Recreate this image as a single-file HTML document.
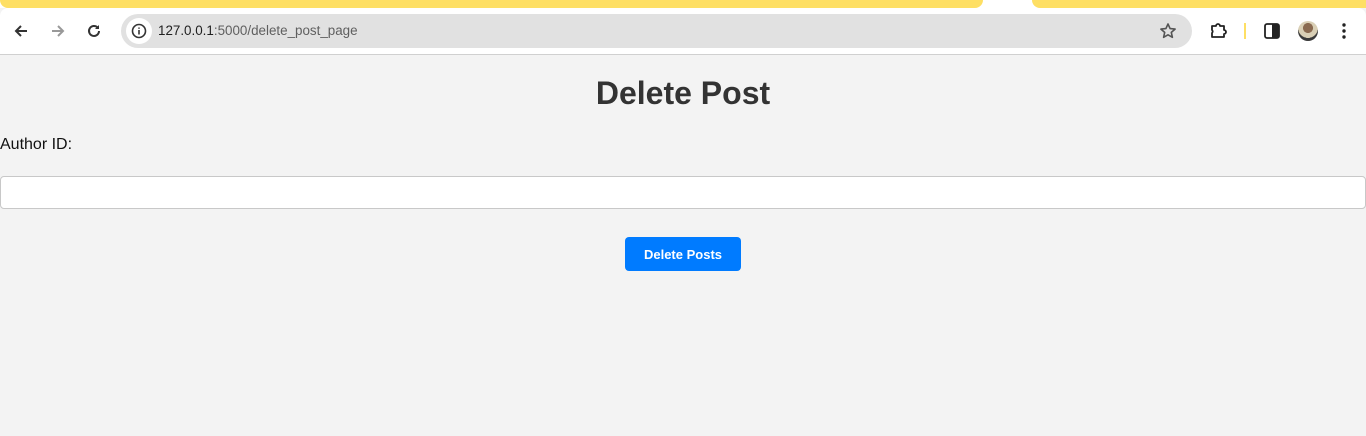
<!DOCTYPE html>
<html><head><meta charset="utf-8"><style>
*{box-sizing:border-box;margin:0;padding:0}
body{width:1366px;height:436px;overflow:hidden;background:#f3f3f3;font-family:"Liberation Sans",Arial,sans-serif;position:relative}
.tabs{position:absolute;left:0;top:0;width:1366px;height:8px;background:#fff}
.y1{position:absolute;left:0;top:0;width:983px;height:8px;background:#fedf64;border-radius:0 0 10px 10px}
.y2{position:absolute;left:1032px;top:0;width:334px;height:8px;background:#fedf64;border-radius:0 0 0 10px}
.bar{position:absolute;left:0;top:8px;width:1366px;height:46px;background:#fff;border-radius:8px 8px 0 0}
.line{position:absolute;left:0;top:54px;width:1366px;height:1px;background:#d0d0d0}
.omni{position:absolute;left:121px;top:14px;width:1071px;height:34px;background:#e1e1e1;border-radius:17px}
.info{position:absolute;left:126px;top:18px;width:26px;height:26px;border-radius:13px;background:#fff}
.url{position:absolute;left:158px;top:23px;font-size:13.4px;color:#1f1f1f}
.url span{color:#5f5f5f}
svg{position:absolute}
h1{position:absolute;left:0;width:1366px;top:75px;text-align:center;font-size:32px;font-weight:bold;color:#333}
.lbl{position:absolute;left:0;top:136px;font-size:16px;color:#111}
.inp{position:absolute;left:0;top:176px;width:1366px;height:33px;background:#fff;border:1px solid #c8c8c8;border-radius:4px}
.btn{position:absolute;left:625px;top:237px;width:116px;height:34px;background:#007bff;border-radius:4px;color:#fff;font-size:13px;font-weight:bold;text-align:center;line-height:35px}
</style></head><body>
<div class="tabs"></div><div class="y1"></div><div class="y2"></div>
<div class="bar"></div><div class="line"></div>
<svg style="left:12px;top:22px" width="18" height="18" viewBox="0 0 18 18"><path d="M15 9H4M9 4L4 9l5 5" stroke="#333" stroke-width="2" fill="none"/></svg>
<svg style="left:49px;top:22px" width="18" height="18" viewBox="0 0 18 18"><path d="M3 9h11M9 4l5 5-5 5" stroke="#999" stroke-width="2" fill="none"/></svg>
<svg style="left:85px;top:22px" width="18" height="18" viewBox="0 0 18 18"><path d="M14 9a5 5 0 1 1-1.5-3.6" stroke="#333" stroke-width="2" fill="none"/><path d="M14 3v4h-4z" fill="#333"/></svg>
<div class="omni"></div><div class="info"></div>
<svg style="left:131px;top:23px" width="16" height="16" viewBox="0 0 16 16"><circle cx="8" cy="8" r="6.5" stroke="#333" stroke-width="1.6" fill="none"/><path d="M8 7v4.5M8 4.5v1.2" stroke="#333" stroke-width="1.6"/></svg>
<div class="url">127.0.0.1<span>:5000/delete_post_page</span></div>
<svg style="left:1159px;top:22px" width="18" height="18" viewBox="0 0 18 18"><path d="M9 2l2.1 4.6 5 .5-3.8 3.3 1.1 4.9L9 12.8l-4.4 2.5 1.1-4.9L1.9 7.1l5-.5z" stroke="#555" stroke-width="1.6" fill="none" stroke-linejoin="round"/></svg>
<svg style="left:1209px;top:22px" width="18" height="18" viewBox="0 0 18 18"><path d="M3 4h4a2 2 0 0 1 4 0h4v4a2 2 0 0 1 0 4v3H3v-4a2 2 0 0 0 0-3z" stroke="#222" stroke-width="1.8" fill="none" stroke-linejoin="round"/></svg>
<div style="position:absolute;left:1244px;top:23px;width:2px;height:16px;background:#fedf64"></div>
<svg style="left:1264px;top:23px" width="16" height="16" viewBox="0 0 16 16"><rect x="1" y="1" width="14" height="14" rx="2" stroke="#222" stroke-width="1.8" fill="none"/><rect x="8" y="1" width="7" height="14" fill="#222"/></svg>
<div style="position:absolute;left:1298px;top:21px;width:20px;height:20px;border-radius:10px;background:radial-gradient(circle at 50% 35%,#8a6a50 0 30%,#d9cfb5 31% 60%,#3a3a3a 61%)"></div>
<svg style="left:1336px;top:22px" width="16" height="18" viewBox="0 0 16 18"><circle cx="8" cy="3" r="1.7" fill="#222"/><circle cx="8" cy="9" r="1.7" fill="#222"/><circle cx="8" cy="15" r="1.7" fill="#222"/></svg>
<h1>Delete Post</h1>
<div class="lbl">Author ID:</div>
<div class="inp"></div>
<div class="btn">Delete Posts</div>
</body></html>
